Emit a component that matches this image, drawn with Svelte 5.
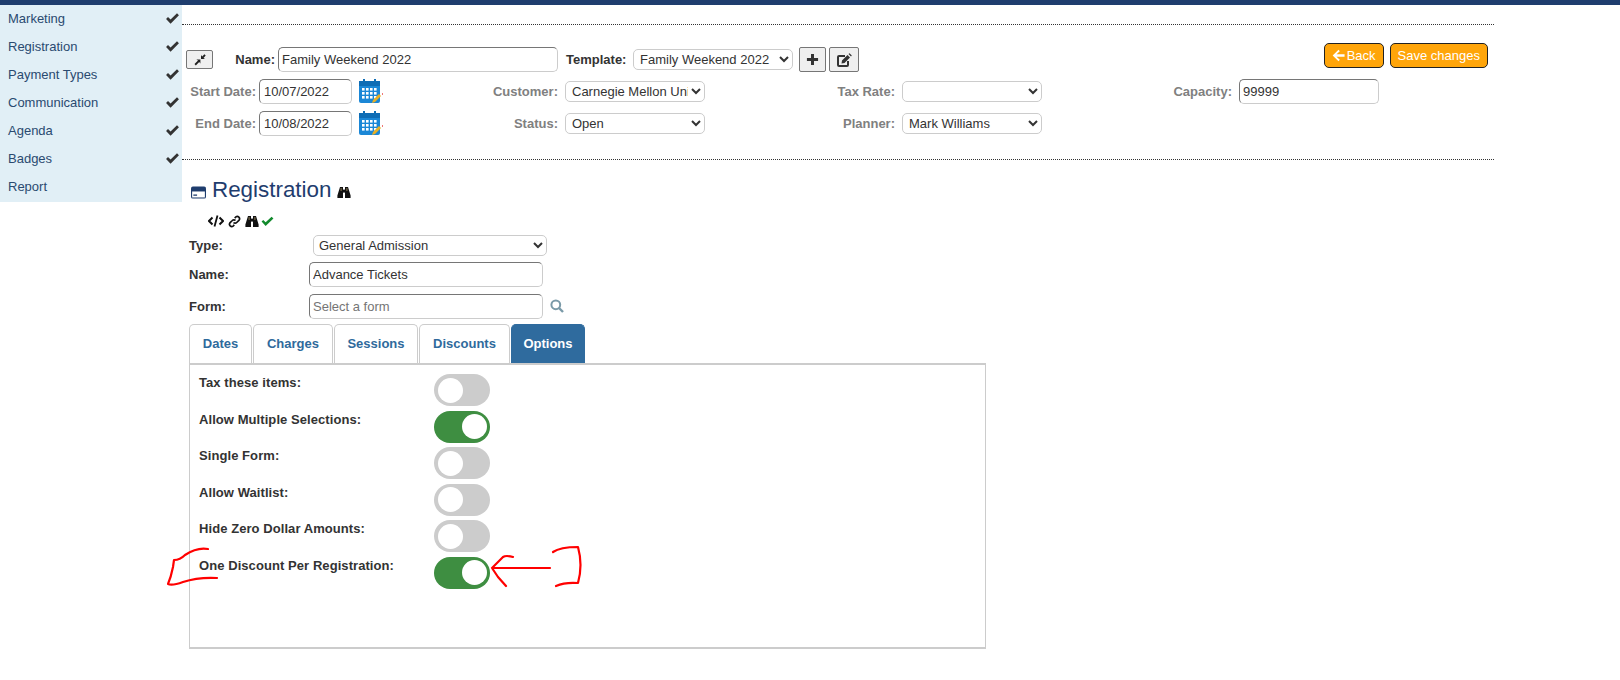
<script>
    // left hand menu
    const menu = [
        { name: "Marketing", done: true },
        { name: "Registration", done: true },
        { name: "Payment Types", done: true },
        { name: "Communication", done: true },
        { name: "Agenda", done: true },
        { name: "Badges", done: true },
        { name: "Report", done: false }
    ];

    const tabs = [
        { name: "Dates", width: 63 },
        { name: "Charges", width: 80 },
        { name: "Sessions", width: 84 },
        { name: "Discounts", width: 91 },
        { name: "Options", width: 74 }
    ];

    // the switches on the options tab
    const options = [
        { label: "Tax these items:", on: false },
        { label: "Allow Multiple Selections:", on: true },
        { label: "Single Form:", on: false },
        { label: "Allow Waitlist:", on: false },
        { label: "Hide Zero Dollar Amounts:", on: false },
        { label: "One Discount Per Registration:", on: true }
    ];
</script>

{#snippet check()}
    <svg class="check" viewBox="0 0 14 12"><path d="M1 6.5 L2.8 4.6 L5.2 7 L11.2 1 L13 2.9 L5.2 10.8 Z" fill="#333" /></svg>
{/snippet}

{#snippet binoculars()}
    <svg class="binoc" viewBox="0 0 14 13">
        <path d="M3 1 h3 v11 h-5.6 v-2.6 Z M8 1 h3 l2.6 8.4 v2.6 h-5.6 Z" fill="#111" />
        <rect x="6" y="3.6" width="2" height="3" fill="#111" />
        <rect x="3.6" y="2" width="1" height="3" fill="#8a7a55" />
        <rect x="9.4" y="2" width="1" height="3" fill="#8a7a55" />
    </svg>
{/snippet}

{#snippet calendar()}
    <svg class="cal" viewBox="0 0 24 26">
        <rect x="0" y="2" width="21" height="22" rx="2" fill="#1b87d6" />
        <rect x="0" y="2" width="21" height="5" fill="#0f6db5" />
        <rect x="4" y="0" width="2" height="4" fill="#0f6db5" />
        <rect x="15" y="0" width="2" height="4" fill="#0f6db5" />
        {#each [9, 13, 17] as y}
            {#each [3, 7, 11, 15] as x}
                <rect {x} {y} width="2.6" height="2.6" fill="#fff" />
            {/each}
        {/each}
        <path d="M13 24 L14 21 L20 15 L22 17 L16 23 Z" fill="#e8b024" />
        <rect x="23" y="14" width="1" height="2" fill="#e77" />
    </svg>
{/snippet}

<div class="topbar"></div>

<div class="page">
    <nav class="sidebar">
        {#each menu as item}
            <div class="menu-item">
                <span>{item.name}</span>
                {#if item.done}{@render check()}{/if}
            </div>
        {/each}
    </nav>

    <main class="main">
        <section class="header-form">
            <div class="row-one">
                <button class="collapse" aria-label="Collapse">
                    <svg viewBox="0 0 12 12" width="12" height="12">
                        <path d="M0.5 10 L4 6.6 L2.4 5.4 H6.4 V9.6 L5.2 8 L1.8 11.5 Z M7 1 V5 H11 L9.5 3.9 L11.7 1.6 L10.4 0.3 L8.2 2.6 Z" fill="#222" />
                    </svg>
                </button>
                <b class="name-label">Name:</b>
                <input class="name-input" value="Family Weekend 2022" />
                <b class="template-label">Template:</b>
                <select class="template-select"><option>Family Weekend 2022</option></select>
                <button class="square" aria-label="Add">
                    <svg viewBox="0 0 14 14" width="13" height="13"><path d="M5.4 1 h3.2 v4.4 H13 v3.2 H8.6 V13 H5.4 V8.6 H1 V5.4 h4.4 Z" fill="#333" /></svg>
                </button>
                <button class="square edit" aria-label="Edit">
                    <svg viewBox="0 0 16 14" width="16" height="14">
                        <path d="M9 3 H3 Q2 3 2 4 V12 Q2 13 3 13 H11 Q12 13 12 12 V8" fill="none" stroke="#333" stroke-width="2" />
                        <path d="M6 7.5 L11.5 2 L14 4.5 L8.5 10 L5.5 10.5 Z M12.5 1 L13.5 0.2 L15.8 2.5 L15 3.5 Z" fill="#333" />
                    </svg>
                </button>
                <div class="actions">
                    <button class="orange">
                        <svg viewBox="0 0 12 12" width="13" height="13"><path d="M6 0.8 L7.2 2 L4.2 4.9 H11.6 V7.1 H4.2 L7.2 10 L6 11.2 L0.6 6 Z" fill="#fff" /></svg>
                        Back
                    </button>
                    <button class="orange">Save changes</button>
                </div>
            </div>

            <div class="fields">
                <label class="lbl first" for="start">Start Date:</label>
                <input id="start" class="date" value="10/07/2022" />
                {@render calendar()}
                <label class="lbl" for="customer">Customer:</label>
                <select id="customer" class="sel"><option>Carnegie Mellon University</option></select>
                <label class="lbl" for="tax">Tax Rate:</label>
                <select id="tax" class="sel"><option></option></select>
                <label class="lbl" for="capacity">Capacity:</label>
                <input id="capacity" class="cap" value="99999" />

                <label class="lbl first" for="end">End Date:</label>
                <input id="end" class="date" value="10/08/2022" />
                {@render calendar()}
                <label class="lbl" for="status">Status:</label>
                <select id="status" class="sel"><option>Open</option></select>
                <label class="lbl" for="planner">Planner:</label>
                <select id="planner" class="sel"><option>Mark Williams</option></select>
            </div>
        </section>

        <section class="content">
            <h2 class="title">
                <svg class="card" viewBox="0 0 16 13">
                    <rect x="0" y="0" width="16" height="13" rx="2" fill="#1f3d6e" />
                    <rect x="1.2" y="5.4" width="13.6" height="6.4" fill="#fff" />
                    <rect x="2.5" y="8.6" width="4" height="1.4" fill="#1f3d6e" />
                </svg>
                <span>Registration</span>
                {@render binoculars()}
            </h2>

            <div class="mini-icons">
                <svg class="code" viewBox="0 0 16 12">
                    <path d="M4.5 2.5 L1 6 L4.5 9.5 M11.5 2.5 L15 6 L11.5 9.5" fill="none" stroke="#111" stroke-width="2" />
                    <path d="M9.5 0.5 L6.5 11.5" stroke="#111" stroke-width="1.8" />
                </svg>
                <svg class="link" viewBox="0 0 13 13">
                    <path d="M5.5 7.5 a2.2 2.2 0 0 0 3.2 0 l2.4 -2.4 a2.3 2.3 0 0 0 -3.2 -3.2 l-1.2 1.2 M7.5 5.5 a2.2 2.2 0 0 0 -3.2 0 l-2.4 2.4 a2.3 2.3 0 0 0 3.2 3.2 l1.2 -1.2" fill="none" stroke="#111" stroke-width="1.7" />
                </svg>
                {@render binoculars()}
                <svg class="ok" viewBox="0 0 14 11"><path d="M0.6 5.6 L2.4 3.8 L5 6.4 L11.4 0.4 L13.4 2.2 L5 10.4 Z" fill="#128a2c" /></svg>
            </div>

            <div class="line type-line">
                <b>Type:</b>
                <select class="type-select"><option>General Admission</option></select>
            </div>
            <div class="line">
                <b>Name:</b>
                <input class="wide" value="Advance Tickets" />
            </div>
            <div class="line">
                <b>Form:</b>
                <input class="wide" placeholder="Select a form" />
                <svg class="search" viewBox="0 0 14 14">
                    <circle cx="5.8" cy="5.8" r="4.4" fill="none" stroke="#7a9aa8" stroke-width="2" />
                    <path d="M9 9 L13 13" stroke="#7a9aa8" stroke-width="2.4" />
                </svg>
            </div>

            <div class="tabs">
                {#each tabs as tab}
                    <div class="tab" class:active={tab.name === "Options"} style="width: {tab.width}px">{tab.name}</div>
                {/each}
            </div>

            <div class="panel">
                {#each options as opt}
                    <div class="option">
                        <b>{opt.label}</b>
                        <span class="switch" class:on={opt.on}><i></i></span>
                    </div>
                {/each}
            </div>
        </section>
    </main>
</div>

<!-- red marker scribbled over the screenshot -->
<svg class="scribble" viewBox="0 0 1620 680">
    <path d="M208 549 Q197 547 185 555 Q180 560 174 560 L173 567 Q171 577 168 584 Q172 586 183 582 Q198 577 217 578" />
    <path d="M513 557 Q506 555 503 557 L492 568 L498 577 L506 586 M492 568 L550 568" />
    <path d="M553 552 Q560 547 578 547 Q583 565 578 583 Q565 582 556 586" />
</svg>

<style>
    :global(body) {
        margin: 0;
        background: #fff;
        font-family: "Liberation Sans", Arial, sans-serif;
        font-size: 13px;
        color: #333;
    }
    .topbar {
        height: 5px;
        background: #1f3d6e;
    }
    .page {
        display: flex;
        align-items: flex-start;
    }
    .sidebar {
        width: 182px;
        height: 197px;
        flex: none;
        background: #e1eff6;
    }
    .menu-item {
        box-sizing: border-box;
        height: 28px;
        padding: 0 2px 2px 8px;
        display: flex;
        align-items: center;
        justify-content: space-between;
        color: #2a4a70;
    }
    .check {
        width: 15px;
        height: 13px;
    }
    .main {
        width: 1312px;
        padding-top: 19px;
    }
    .header-form {
        height: 136px;
        box-sizing: border-box;
        border-top: 1px dotted #333;
        border-bottom: 1px dotted #333;
    }
    .row-one {
        display: flex;
        align-items: center;
        height: 48px;
        padding: 21px 6px 0 4px;
        box-sizing: border-box;
    }
    input,
    select {
        box-sizing: border-box;
        font: inherit;
        color: #333;
        background: #fff;
        border: 1px solid #ccc;
        border-radius: 5px;
    }
    input {
        height: 25px;
        padding: 0 3px;
        border-top-color: #767676;
        border-left-color: #767676;
    }
    select {
        height: 21px;
        padding: 0 0 0 2px;
    }
    b {
        font-weight: bold;
    }
    .collapse {
        width: 27px;
        height: 19px;
        padding: 0;
        border: 1px solid #767676;
        border-radius: 2px;
        background: #efefef;
        display: flex;
        align-items: center;
        justify-content: center;
    }
    .name-label {
        width: 61px;
        text-align: right;
        margin-right: 3px;
        margin-left: 1px;
    }
    .name-input {
        width: 280px;
    }
    .template-label {
        margin-left: 8px;
        margin-right: 7px;
        width: 60px;
    }
    .template-select {
        width: 160px;
    }
    .square {
        width: 27px;
        height: 25px;
        padding: 0;
        margin-left: 6px;
        border: 1px solid #767676;
        border-radius: 2px;
        background: #efefef;
        display: flex;
        align-items: center;
        justify-content: center;
    }
    .edit {
        margin-left: 3px;
        width: 30px;
    }
    .actions {
        margin-left: auto;
        display: flex;
        gap: 6px;
        margin-top: -9px;
    }
    .orange {
        height: 25px;
        padding: 0 7px;
        font: inherit;
        color: #fff;
        background: #ffa50a;
        border: 1px solid #222;
        border-radius: 5px;
        display: flex;
        align-items: center;
        gap: 2px;
    }
    .fields {
        display: grid;
        grid-template-columns: 77px 100px 24px 182px 140px 197px 140px 197px 140px;
        grid-auto-rows: 25px;
        row-gap: 7px;
        margin-top: 6px;
        align-items: center;
    }
    .lbl {
        text-align: right;
        padding-right: 7px;
        font-weight: bold;
        color: #808080;
    }
    .lbl.first {
        padding-right: 3px;
        white-space: nowrap;
    }
    .date {
        width: 93px;
        padding-left: 4px;
    }
    .cal {
        width: 24px;
        height: 26px;
    }
    .sel {
        width: 140px;
    }
    .cap {
        width: 140px;
    }
    .content {
        padding-left: 7px;
    }
    .title {
        margin: 15px 0 0;
        height: 30px;
        display: flex;
        align-items: center;
        font-size: 22.4px;
        font-weight: normal;
        color: #1f3d6e;
    }
    .card {
        width: 15px;
        height: 13px;
        margin: 4px 6px 0 2px;
    }
    .binoc {
        width: 14px;
        height: 13px;
        margin-left: 6px;
    }
    .title .binoc {
        margin-top: 5px;
    }
    .mini-icons {
        display: flex;
        align-items: center;
        height: 16px;
        margin: 8px 0 3px 19px;
        gap: 4px;
    }
    .mini-icons .binoc {
        margin-left: 0;
    }
    .code {
        width: 16px;
        height: 12px;
    }
    .link {
        width: 13px;
        height: 13px;
    }
    .ok {
        width: 13px;
        height: 11px;
        margin-left: -2px;
    }
    .line {
        display: grid;
        grid-template-columns: 120px auto 1fr;
        align-items: center;
        height: 32px;
        justify-items: start;
    }
    .type-line {
        height: 26px;
    }
    .type-select {
        width: 234px;
        margin-left: 4px;
        padding-left: 1px;
    }
    .wide {
        width: 234px;
    }
    .search {
        width: 14px;
        height: 14px;
        margin-left: 7px;
    }
    .tabs {
        display: flex;
        gap: 1px;
        height: 39px;
        margin-top: 2px;
    }
    .tab {
        box-sizing: border-box;
        padding-bottom: 1px;
        display: flex;
        align-items: center;
        justify-content: center;
        font-weight: bold;
        color: #2f6a9c;
        border: 1px solid #ccc;
        border-bottom: none;
        border-radius: 5px 5px 0 0;
    }
    .tab.active {
        color: #fff;
        background: #2f6b9e;
        border-color: #2f6b9e;
    }
    .panel {
        box-sizing: border-box;
        width: 797px;
        height: 286px;
        padding: 9px 0 0 9px;
        border: 1px solid #ccc;
        border-top-width: 2px;
        border-bottom-width: 2px;
    }
    .option {
        display: grid;
        grid-template-columns: 235px 56px;
        height: 36.6px;
    }
    .option b {
        padding-top: 1px;
        line-height: 15px;
        letter-spacing: 0.07px;
    }
    .switch {
        display: block;
        position: relative;
        width: 56px;
        height: 32px;
        border-radius: 16px;
        background: #ccc;
    }
    .switch i {
        position: absolute;
        top: 3.5px;
        left: 3.5px;
        width: 25px;
        height: 25px;
        border-radius: 50%;
        background: #fff;
    }
    .switch.on {
        background: #3e8e41;
    }
    .switch.on i {
        left: 27.5px;
    }
    .scribble {
        position: absolute;
        left: 0;
        top: 0;
        width: 1620px;
        height: 680px;
        pointer-events: none;
    }
    .scribble path {
        fill: none;
        stroke: #f00;
        stroke-width: 2.2;
        stroke-linejoin: round;
        stroke-linecap: round;
    }
</style>
